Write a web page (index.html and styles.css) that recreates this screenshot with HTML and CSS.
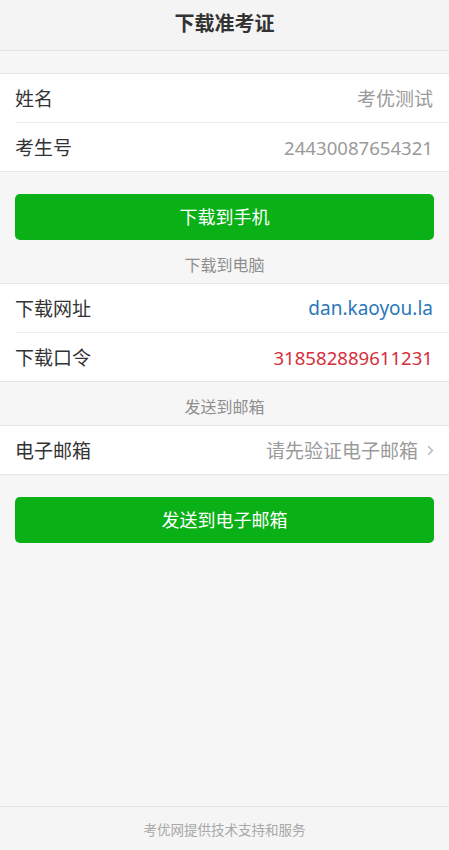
FILE: index.html
```html
<!DOCTYPE html>
<html lang="zh-CN">
<head>
<meta charset="utf-8">
<meta name="viewport" content="width=device-width, initial-scale=1">
<title>下载准考证</title>
<link rel="stylesheet" href="styles.css">
</head>
<body>
<div class="page">
  <header class="topbar"><h1 class="title">下载准考证</h1></header>

  <section class="group group-first">
    <div class="row"><span class="label">姓名</span><span class="value muted">考优测试</span></div>
    <div class="row"><span class="label">考生号</span><span class="value muted num">24430087654321</span></div>
  </section>

  <div class="btn-wrap"><button class="btn" type="button">下载到手机</button></div>

  <div class="section-label">下载到电脑</div>
  <section class="group">
    <div class="row"><span class="label">下载网址</span><span class="value link">dan.kaoyou.la</span></div>
    <div class="row"><span class="label">下载口令</span><span class="value code num">318582889611231</span></div>
  </section>

  <div class="section-label">发送到邮箱</div>
  <section class="group">
    <div class="row"><span class="label">电子邮箱</span><span class="value muted with-arrow">请先验证电子邮箱<svg class="arrow" width="7" height="11" viewBox="0 0 7 11"><path d="M1.2 1.2 L5.4 5.5 L1.2 9.8" fill="none" stroke="#b8b8b8" stroke-width="1.5"/></svg></span></div>
  </section>

  <div class="btn-wrap"><button class="btn" type="button">发送到电子邮箱</button></div>

  <footer class="footer">考优网提供技术支持和服务</footer>
</div>
</body>
</html>
```

FILE: styles.css
```css
* { box-sizing: border-box; }
html, body { margin: 0; padding: 0; }
body {
  background: #f6f6f6;
  font-family: "Noto Sans", "Noto Sans CJK SC", sans-serif;
  color: #333;
}
.page {
  min-height: 100vh;
  display: flex;
  flex-direction: column;
}
.topbar {
  height: 51px;
  background: #f4f4f4;
  border-bottom: 1px solid #e3e3e3;
  display: flex;
  align-items: center;
  justify-content: center;
}
.title {
  margin: 0;
  font-size: 20px;
  font-weight: 700;
  color: #333;
  line-height: 1;
  padding-bottom: 2px;
}
.group {
  background: #fff;
  border-top: 1px solid #e6e6e6;
  border-bottom: 1px solid #e6e6e6;
}
.group-first { margin-top: 22px; }
.row {
  height: 49px;
  margin-left: 15px;
  padding-right: 16px;
  display: flex;
  align-items: center;
  justify-content: space-between;
  border-top: 1px solid #ececec;
  font-size: 19px;
}
.row:first-child { border-top: none; height: 48px; }
.label { color: #333; }
.value { display: flex; align-items: center; }
.num { font-size: 18.6px; }
.muted { color: #9a9a9a; }
.link { color: #2a78ba; }
.code { color: #d6303c; }
.arrow { margin-left: 9px; margin-right: -1px; }
.btn-wrap { padding: 22px 15px 0; }
.btn {
  display: block;
  width: 100%;
  height: 46px;
  border: none;
  border-radius: 5px;
  background: #09b016;
  color: #fff;
  font-family: inherit;
  font-size: 18px;
  padding: 0 0 2px;
}
.section-label {
  padding: 16px 0 9px;
  line-height: 18px;
  text-align: center;
  font-size: 16px;
  color: #8e8e8e;
}
.footer {
  margin-top: auto;
  height: 44px;
  border-top: 1px solid #e4e4e4;
  background: #f5f5f5;
  display: flex;
  align-items: center;
  justify-content: center;
  font-size: 13.5px;
  color: #a8a8a8;
}
```
